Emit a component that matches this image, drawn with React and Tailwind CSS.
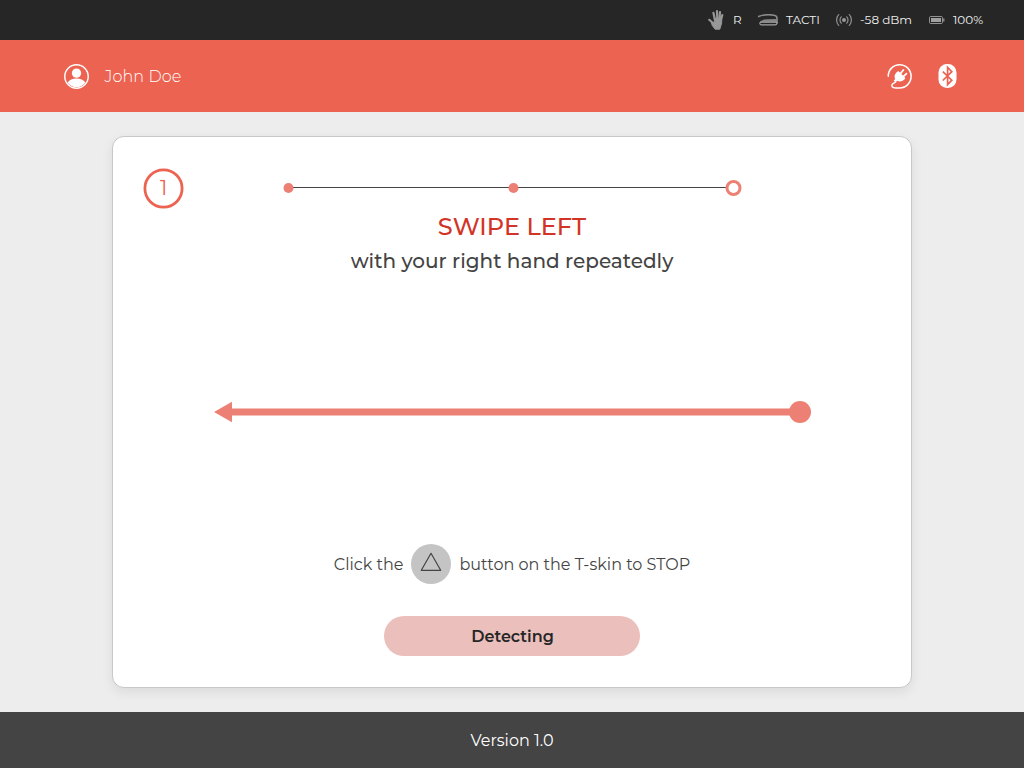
import React from "react";

function HandIcon() {
  return (
    <svg width="16" height="20" viewBox="0 0 16 20" fill="none" stroke="#979797" strokeLinecap="round" strokeLinejoin="round">
      <path d="M7 10 5.400 2.800M9.300 9 9 1.200M11.500 9 12 2M13 10 14.300 5" strokeWidth="2.200" />
      <path d="M1.300 9.800 4 12.200 5.500 15" strokeWidth="2.200" />
      <path d="M6.500 8.400 13.600 8 13.700 13 11.800 19.200H7L4.300 15.500 3.400 12.500 6.500 12Z" fill="#979797" strokeWidth="1" />
    </svg>
  );
}

function TactiIcon() {
  return (
    <svg width="20" height="12" viewBox="0 0 20 12" fill="none">
      <path d="M.5 2.600C4.500.9 11.500.5 16 1.200c2.200.3 3 1.200 3 3v4.500" stroke="#8b8b8b" strokeWidth="1.600" strokeLinecap="round" />
      <path d="M2 7.600C3.600 6 6 5.400 9 5.300l10-.4v3.300H2Z" fill="#858585" />
      <path d="M3 8.200h15.200c.7 0 1 .4.8 1.200-.2 1-.8 1.500-2 1.500H3.500C1.400 10.900 1.300 8.200 3 8.200Z" stroke="#a2a2a2" strokeWidth="1.100" />
    </svg>
  );
}

function SignalIcon() {
  return (
    <svg width="16" height="12" viewBox="0 0 16 12" fill="none" stroke="#929292" strokeWidth="1.200" strokeLinecap="round">
      <circle cx="8" cy="6" r="2" fill="#979797" stroke="none" />
      <path d="M5.200 2.800C3.600 4.500 3.600 7.500 5.200 9.200M10.800 2.800c1.600 1.700 1.600 4.700 0 6.400M2.700.7C-.1 3.600-.1 8.400 2.700 11.300M13.300.7c2.800 2.900 2.800 7.700 0 10.600" />
    </svg>
  );
}

function BatteryIcon() {
  return (
    <svg width="16" height="8" viewBox="0 0 16 8" fill="none">
      <rect x=".5" y=".5" width="13" height="7" rx="1.200" stroke="#929292" />
      <rect x="2" y="2" width="10" height="4" fill="#a0a0a0" />
      <path d="M14.800 2.500v3" stroke="#929292" strokeWidth="1.300" />
    </svg>
  );
}

function UserIcon() {
  return (
    <svg width="25" height="25" viewBox="0 0 26 26" fill="none">
      <circle cx="13" cy="13" r="12.200" stroke="white" strokeWidth="1.500" />
      <circle cx="13" cy="9.500" r="4.800" fill="white" />
      <path d="M3.800 19.300c1.800-2.700 5.200-4.100 9.200-4.100s7.400 1.400 9.200 4.100c-2.100 3.200-5.600 5-9.200 5s-7.100-1.800-9.200-5Z" fill="white" />
    </svg>
  );
}

function PlugIcon() {
  return (
    <svg width="25" height="25" viewBox="0 0 25 25" fill="none">
      <path d="M1.300 12.200C1.100 5.800 6.200.8 12.600.8c6.500 0 11.500 5 11.500 11.500C24.100 18.900 19 24 12.500 24H8.400c-3 0-4.300-2-3.200-3.500.8-1.200 2.100-1.300 3.600-2.800" stroke="white" strokeWidth="1.500" strokeLinecap="round" />
      <path d="m11.400 7 7 7c-1.600 3-5.300 4.400-8.400 2.700l-1.500 1.600-1.800-1.700 1.500-1.700C6.600 12 8.400 8.600 11.400 7Z" fill="white" />
      <path d="m13.600 9.300 2.800-3.300m.1 6.300 3-2.700" stroke="white" strokeWidth="1.800" strokeLinecap="round" />
    </svg>
  );
}

function BluetoothIcon() {
  return (
    <svg width="19" height="24" viewBox="0 0 19 24" fill="none">
      <rect x=".5" width="18" height="24" rx="8.500" fill="white" />
      <path d="m4.800 7.600 9 8.600-4.200 4.500V3.300l4.200 4.400-9 8.800" stroke="#ec6352" strokeWidth="1.700" />
    </svg>
  );
}

function StatusBar() {
  return (
    <div className="flex h-10 shrink-0 items-center bg-[#262626] pl-[708px] text-xs leading-5 text-[#f0f0f0]">
      <HandIcon />
      <span className="ml-[9px] w-[25px]">R</span>
      <TactiIcon />
      <span className="ml-2 w-[50px] whitespace-nowrap">TACTI</span>
      <SignalIcon />
      <span className="ml-2 w-[69px] whitespace-nowrap">-58 dBm</span>
      <BatteryIcon />
      <span className="ml-2 whitespace-nowrap">100%</span>
    </div>
  );
}

function Header() {
  return (
    <header className="flex h-[72px] shrink-0 items-center bg-[#ec6352] pr-[67px] pl-16 text-white">
      <UserIcon />
      <span className="ml-[15.500px] pt-px text-base font-light tracking-[0.1px]">John Doe</span>
      <div className="ml-auto flex items-center gap-[26px]">
        <PlugIcon />
        <BluetoothIcon />
      </div>
    </header>
  );
}

function StepNumber() {
  return (
    <div className="grid size-[41px] shrink-0 place-items-center">
      <svg className="col-start-1 row-start-1" width="41" height="41" viewBox="0 0 41 41" fill="none">
        <circle cx="20.500" cy="20.500" r="18.600" stroke="#ec6352" strokeWidth="2.800" />
      </svg>
      <span className="col-start-1 row-start-1 text-xl leading-none text-[#ec6352]">1</span>
    </div>
  );
}

function Progress() {
  return (
    <svg width="460" height="18" viewBox="0 0 460 18">
      <path d="M5 8.500h440" stroke="#444" />
      <circle cx="6.500" cy="9" r="5" fill="#ec8074" />
      <circle cx="231.500" cy="9" r="5" fill="#ec8074" />
      <circle cx="451.500" cy="9" r="6.500" fill="white" stroke="#ec8074" strokeWidth="3" />
    </svg>
  );
}

export default function App() {
  return (
    <div className="flex h-[768px] w-[1024px] flex-col overflow-hidden bg-[#ededed] font-['Montserrat','Inter',sans-serif] text-[#444]">
      <StatusBar />
      <Header />
      <main className="flex h-[600px] shrink-0 justify-center pt-6">
        <section className="flex h-[552px] w-[800px] flex-col items-center rounded-xl border border-[#c8c8c8] bg-white shadow-[0_4px_12px_rgba(0,0,0,0.08)]">
          <div className="mt-[31px] flex h-10 w-full items-center gap-[98px] pl-[30px]">
            <StepNumber />
            <Progress />
          </div>
          <h1 className="mt-[3px] text-2xl leading-8 font-medium whitespace-nowrap text-[#d23527]">SWIPE LEFT</h1>
          <p className="mt-0.5 text-xl leading-8 font-medium whitespace-nowrap">with your right hand repeatedly</p>
          <svg className="mt-[123px] ml-px" width="598" height="24" viewBox="0 0 598 24" fill="#ec8074">
            <path d="M0 12 18 1.700v6.700h569v7H18v6.900Z" />
            <circle cx="586" cy="12" r="11" />
          </svg>
          <div className="mt-[120px] flex h-10 items-center gap-2 text-base whitespace-nowrap">
            <span className="pt-0.5">Click the</span>
            <svg width="40" height="40" viewBox="0 0 40 40" fill="none">
              <circle cx="20" cy="20" r="20" fill="#c4c4c4" />
              <path d="m20 9.300 9.700 17H10.300Z" stroke="#444" strokeWidth="1.200" strokeLinejoin="round" />
            </svg>
            <span className="pt-0.5">button on the T-skin to STOP</span>
          </div>
          <button className="mt-8 h-10 w-64 rounded-full bg-[#ebbfbb] pt-0.5 pl-px text-base font-semibold text-[#262626]">Detecting</button>
        </section>
      </main>
      <footer className="flex h-14 shrink-0 items-center justify-center bg-[#444] pt-px text-base text-white">Version 1.0</footer>
    </div>
  );
}
